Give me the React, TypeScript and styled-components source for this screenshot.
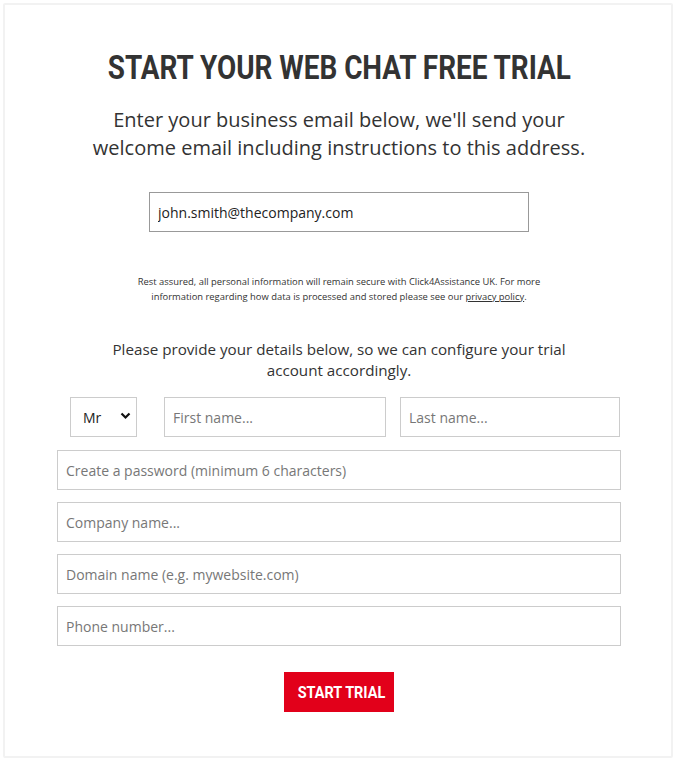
import React from "react";
import styled, { createGlobalStyle } from "styled-components";

const Global = createGlobalStyle`
  html, body { margin: 0; padding: 0; background: #fff; }
  * { box-sizing: border-box; }
`;

const Frame = styled.div`
  margin: 3px;
  width: 670px;
  height: 755px;
  border: 2px solid #f2f2f2;
  border-radius: 2px;
  display: flex;
  flex-direction: column;
  align-items: center;
  padding-top: 42px;
  padding-left: 2px;
  font-family: "Open Sans", "Noto Sans", sans-serif;
  color: #333;
`;

const Title = styled.h1`
  margin: 0;
  font-family: Roboto, "Liberation Sans", sans-serif;
  font-weight: 700;
  font-size: 34px;
  line-height: 40px;
  color: #333;
  white-space: nowrap;
  transform: scaleX(0.82);
`;

const Lead = styled.p`
  margin: 19px 0 0;
  text-align: center;
  font-size: 20px;
  line-height: 28px;
  color: #333;
  width: 520px;
`;

const EmailInput = styled.input`
  margin-top: 30px;
  width: 380px;
  height: 40px;
  border: 1px solid #999;
  padding: 0 8px;
  font-family: inherit;
  font-size: 14px;
  color: #222;
  outline: none;
`;

const Notice = styled.p`
  margin: 42px 0 0;
  width: 420px;
  text-align: center;
  font-size: 9.4px;
  line-height: 15px;
  color: #333;
`;

const Link = styled.a`
  color: #333;
  text-decoration: underline;
`;

const Prompt = styled.p`
  margin: 35px 0 0;
  width: 470px;
  text-align: center;
  font-size: 15.2px;
  line-height: 21px;
  color: #333;
`;

const Form = styled.form`
  margin-top: 16px;
  width: 564px;
  display: flex;
  flex-direction: column;
  align-items: stretch;
  gap: 12px;
`;

const NameRow = styled.div`
  display: flex;
  padding-left: 13px;
  margin-bottom: 1px;
`;

const SelectWrap = styled.div`
  position: relative;
  width: 67px;
  height: 40px;
  margin-right: 27px;
`;

const Select = styled.select`
  appearance: none;
  -webkit-appearance: none;
  width: 100%;
  height: 100%;
  border: 1px solid #ccc;
  border-radius: 0;
  background: #fff;
  padding: 0 0 0 12px;
  font-family: inherit;
  font-size: 14px;
  color: #222;
  outline: none;
`;

const Chevron = styled.svg`
  position: absolute;
  right: 6px;
  top: 15px;
  width: 11px;
  height: 8px;
  pointer-events: none;
`;

const Field = styled.input<{ $w?: number; $gap?: number }>`
  height: 40px;
  width: ${(p) => (p.$w ? `${p.$w}px` : "100%")};
  margin-right: ${(p) => (p.$gap ? `${p.$gap}px` : "0")};
  border: 1px solid #ccc;
  padding: 0 8px;
  font-family: inherit;
  font-size: 14px;
  color: #222;
  outline: none;
  &::placeholder { color: #777; }
`;

const Submit = styled.button`
  margin: 14px auto 0;
  width: 110px;
  height: 40px;
  border: none;
  background: #e2001a;
  color: #fff;
  font-family: Roboto, "Liberation Sans", sans-serif;
  font-weight: 700;
  font-size: 17px;
  cursor: pointer;
`;

const SubmitLabel = styled.span`
  display: inline-block;
  transform: scaleX(0.85);
  white-space: nowrap;
`;

export default function App() {
  return (
    <>
      <Global />
      <Frame>
        <Title>START YOUR WEB CHAT FREE TRIAL</Title>
        <Lead>
          Enter your business email below, we'll send your welcome email including instructions to this address.
        </Lead>
        <EmailInput type="email" defaultValue="john.smith@thecompany.com" />
        <Notice>
          Rest assured, all personal information will remain secure with Click4Assistance UK. For more information
          regarding how data is processed and stored please see our <Link href="#">privacy policy</Link>.
        </Notice>
        <Prompt>Please provide your details below, so we can configure your trial account accordingly.</Prompt>
        <Form onSubmit={(e) => e.preventDefault()}>
          <NameRow>
            <SelectWrap>
              <Select defaultValue="Mr">
                <option>Mr</option>
                <option>Mrs</option>
                <option>Miss</option>
                <option>Ms</option>
                <option>Dr</option>
              </Select>
              <Chevron viewBox="0 0 11 8">
                <path d="M1.5 1.5 L5.5 5.5 L9.5 1.5" fill="none" stroke="#111" strokeWidth="2.2" />
              </Chevron>
            </SelectWrap>
            <Field $w={222} $gap={14} placeholder="First name..." />
            <Field $w={220} placeholder="Last name..." />
          </NameRow>
          <Field type="password" placeholder="Create a password (minimum 6 characters)" />
          <Field placeholder="Company name..." />
          <Field placeholder="Domain name (e.g. mywebsite.com)" />
          <Field placeholder="Phone number..." />
          <Submit type="submit">
            <SubmitLabel>START TRIAL</SubmitLabel>
          </Submit>
        </Form>
      </Frame>
    </>
  );
}
